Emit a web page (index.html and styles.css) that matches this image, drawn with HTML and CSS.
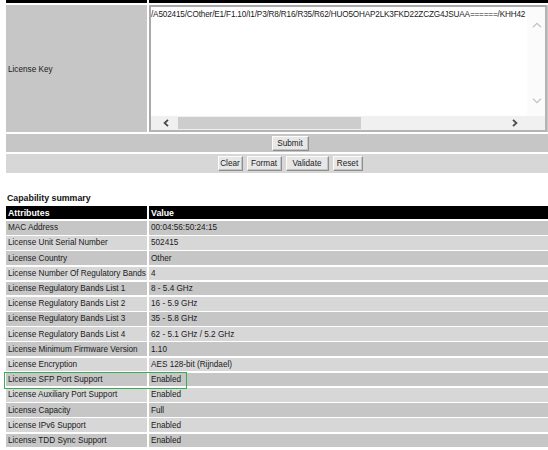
FILE: index.html
```html
<!DOCTYPE html>
<html>
<head>
<meta charset="utf-8">
<title>License Key</title>
<link rel="stylesheet" href="styles.css">
</head>
<body>
<div class="page">
  <div class="keytable">
    <div class="hd"></div>
    <div class="hd"></div>
    <div class="cell dark label">License Key</div>
    <div class="cell dark keycell">
      <div class="textarea">
        <div class="ta-text">/A502415/COther/E1/F1.10/I1/P3/R8/R16/R35/R62/HUO5OHAP2LK3FKD22ZCZG4JSUAA======/KHH42</div>
        <div class="vscroll">
          <svg width="10" height="6" viewBox="0 0 10 6"><path d="M1 5.2 L5 1.4 L9 5.2" stroke="#c2c2c2" stroke-width="1.2" fill="none"/></svg>
          <svg width="10" height="6" viewBox="0 0 10 6"><path d="M1 0.8 L5 4.6 L9 0.8" stroke="#c2c2c2" stroke-width="1.2" fill="none"/></svg>
        </div>
        <div class="hscroll">
          <span class="arrow left"><svg width="6" height="8" viewBox="0 0 6 8"><path d="M5 0.8 L1.6 4 L5 7.2" stroke="#4a4a4a" stroke-width="1.8" fill="none"/></svg></span>
          <span class="thumb"></span>
          <span class="track"></span>
          <span class="arrow right"><svg width="6" height="8" viewBox="0 0 6 8"><path d="M1 0.8 L4.4 4 L1 7.2" stroke="#4a4a4a" stroke-width="1.8" fill="none"/></svg></span>
        </div>
        <div class="corner"></div>
      </div>
    </div>
    <div class="cell dark span actions">
      <button class="btn w-submit">Submit</button>
    </div>
    <div class="cell light span actions">
      <button class="btn w-clear">Clear</button>
      <button class="btn w-format">Format</button>
      <button class="btn w-validate">Validate</button>
      <button class="btn w-reset">Reset</button>
    </div>
  </div>

  <div class="cap">Capability summary</div>

  <div class="captable">
    <div class="row head"><div class="c1">Attributes</div><div class="c2">Value</div></div>
    <div class="row"><div class="c1">MAC Address</div><div class="c2">00:04:56:50:24:15</div></div>
    <div class="row"><div class="c1">License Unit Serial Number</div><div class="c2">502415</div></div>
    <div class="row"><div class="c1">License Country</div><div class="c2">Other</div></div>
    <div class="row"><div class="c1">License Number Of Regulatory Bands</div><div class="c2">4</div></div>
    <div class="row"><div class="c1">License Regulatory Bands List 1</div><div class="c2">8 - 5.4 GHz</div></div>
    <div class="row"><div class="c1">License Regulatory Bands List 2</div><div class="c2">16 - 5.9 GHz</div></div>
    <div class="row"><div class="c1">License Regulatory Bands List 3</div><div class="c2">35 - 5.8 GHz</div></div>
    <div class="row"><div class="c1">License Regulatory Bands List 4</div><div class="c2">62 - 5.1 GHz / 5.2 GHz</div></div>
    <div class="row"><div class="c1">License Minimum Firmware Version</div><div class="c2">1.10</div></div>
    <div class="row"><div class="c1">License Encryption</div><div class="c2">AES 128-bit (Rijndael)</div></div>
    <div class="row"><div class="c1">License SFP Port Support</div><div class="c2">Enabled</div></div>
    <div class="row"><div class="c1">License Auxiliary Port Support</div><div class="c2">Enabled</div></div>
    <div class="row"><div class="c1">License Capacity</div><div class="c2">Full</div></div>
    <div class="row"><div class="c1">License IPv6 Support</div><div class="c2">Enabled</div></div>
    <div class="row"><div class="c1">License TDD Sync Support</div><div class="c2">Enabled</div></div>
  </div>

  <div class="highlight"></div>
</div>
</body>
</html>
```
FILE: styles.css
```css
html, body {
  margin: 0;
  padding: 0;
  background: #ffffff;
}
body {
  width: 548px;
  height: 450px;
  overflow: hidden;
  font-family: "Liberation Sans", Arial, sans-serif;
  font-size: 8.2px;
  color: #1a1a1a;
}
.page {
  position: relative;
  width: 548px;
  height: 450px;
  overflow: hidden;
}

/* ---------- license key table ---------- */
.keytable {
  margin-left: 6px;
  width: 568px;
  display: grid;
  grid-template-columns: 141px 1fr;
  grid-template-rows: 3px 127px 18px 19px;
  column-gap: 2px;
  row-gap: 2px;
}
.hd {
  background: #000000;
}
.cell {
  box-sizing: border-box;
}
.dark { background: #c6c6c6; }
.light { background: #d7d7d7; }
.label {
  display: flex;
  align-items: center;
  padding-left: 2px;
  padding-top: 2px;
}
.span {
  grid-column: 1 / 3;
}
.keycell {
  padding: 0;
}
.textarea {
  box-sizing: border-box;
  width: 398px;
  height: 127px;
  background: #ffffff;
  border: 2px solid #a9a9a9;
  border-right-color: #b4b4b4;
  border-bottom-color: #b4b4b4;
  display: grid;
  grid-template-columns: 1fr 18px;
  grid-template-rows: 1fr 14px;
}
.ta-text {
  overflow: hidden;
  white-space: nowrap;
  padding: 1.5px 0 0 0;
  line-height: 11px;
  letter-spacing: -0.17px;
  color: #1a1a1a;
}
.vscroll {
  background: #fbfbfb;
  display: flex;
  flex-direction: column;
  justify-content: space-between;
  align-items: center;
  padding: 15px 0 12px 2px;
}
.vscroll svg { display: block; }
.hscroll {
  background: #f0f0f0;
  display: flex;
  align-items: stretch;
  padding: 1px 0 1px 0;
}
.arrow {
  display: flex;
  align-items: center;
  justify-content: center;
}
.arrow svg { display: block; }
.arrow.left { width: 27px; padding-left: 2px; box-sizing: border-box; }
.arrow.right { width: 24px; }
.thumb {
  width: 183px;
  background: #cdcdcd;
}
.track { flex: 1; }
.corner { background: #f0f0f0; }

.actions {
  display: flex;
  justify-content: center;
  align-items: center;
  gap: 4px;
}
.btn {
  box-sizing: border-box;
  height: 15px;
  padding: 0;
  margin: 0;
  font-family: "Liberation Sans", Arial, sans-serif;
  font-size: 8.2px;
  color: #1a1a1a;
  background: #e7e7e7;
  border: 1px solid;
  border-color: #fbfbfb #8e8e8e #8e8e8e #fbfbfb;
  box-shadow: inset -1px -1px 0 #c4c4c4;
  border-radius: 0;
}
.w-submit { width: 37px; }
.w-clear { width: 25px; }
.w-format { width: 35px; }
.w-validate { width: 43px; }
.w-reset { width: 30px; }

/* ---------- capability summary ---------- */
.cap {
  box-sizing: border-box;
  height: 32.8px;
  padding: 19.5px 0 0 7px;
  line-height: 11px;
  font-weight: bold;
  font-size: 8.8px;
  color: #111111;
}
.captable {
  margin-left: 6px;
  width: 568px;
  display: flex;
  flex-direction: column;
  gap: 1.6px;
}
.row {
  display: grid;
  grid-template-columns: 141px 1fr;
  column-gap: 2px;
  height: 13.6px;
}
.row .c1, .row .c2 {
  display: flex;
  align-items: center;
  padding-left: 2px;
  white-space: nowrap;
  overflow: hidden;
}
.row:nth-child(even) .c1, .row:nth-child(even) .c2 { background: #c6c6c6; }
.row:nth-child(odd) .c1, .row:nth-child(odd) .c2 { background: #d7d7d7; }
.row.head .c1, .row.head .c2 {
  background: #000000;
  color: #ffffff;
  font-weight: bold;
  font-size: 8.8px;
}

.highlight {
  position: absolute;
  left: 4px;
  top: 371.5px;
  width: 183px;
  height: 17px;
  box-sizing: border-box;
  border: 1.5px solid #35ad55;
}
```
